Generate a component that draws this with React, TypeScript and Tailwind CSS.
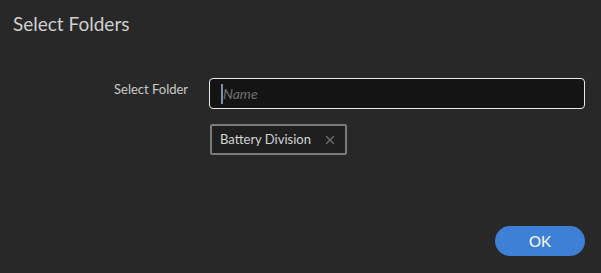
import { X } from "lucide-react";

function App() {
  return (
    <div
      className="w-[601px] h-[273px] bg-[#282828] flex flex-col text-[#d0d0d0]"
      style={{ fontFamily: "Lato, 'Noto Sans', sans-serif" }}
    >
      <div className="pt-[11px] pl-[13px] text-[19px] leading-[26px] text-[#cfcfcf]">Select Folders</div>

      <div className="flex mt-[41px]">
        <div className="w-[209px] pl-[114px] pt-[2px] text-[13px] leading-[18px] text-[#c9c9c9]">
          Select Folder
        </div>
        <div className="flex flex-col">
          <div className="w-[376px] h-[31px] rounded-[4px] border border-[#e8e8e8] bg-[#141414] flex items-center pl-[11px]">
            <span className="w-[2px] h-[20px] bg-[#7f8fa6]" />
            <span className="text-[14px] italic text-[#6f6f6f]">Name</span>
          </div>
          <div className="mt-[15px] ml-[1px] w-[137px] h-[31px] border-2 border-[#7b7b7b] rounded-[2px] bg-[#1f1f1f] flex items-center pl-[8px]">
            <span className="text-[13px] text-[#d2d2d2]">Battery Division</span>
            <X className="ml-[12px] text-[#707070]" size={14} strokeWidth={2.25} />
          </div>
        </div>
      </div>

      <div className="flex justify-end mt-auto mb-[17px] pr-[16px]">
        <button className="w-[90px] h-[30px] rounded-full bg-[#3e80d5] text-white text-[15px]">OK</button>
      </div>
    </div>
  );
}

export default App;
